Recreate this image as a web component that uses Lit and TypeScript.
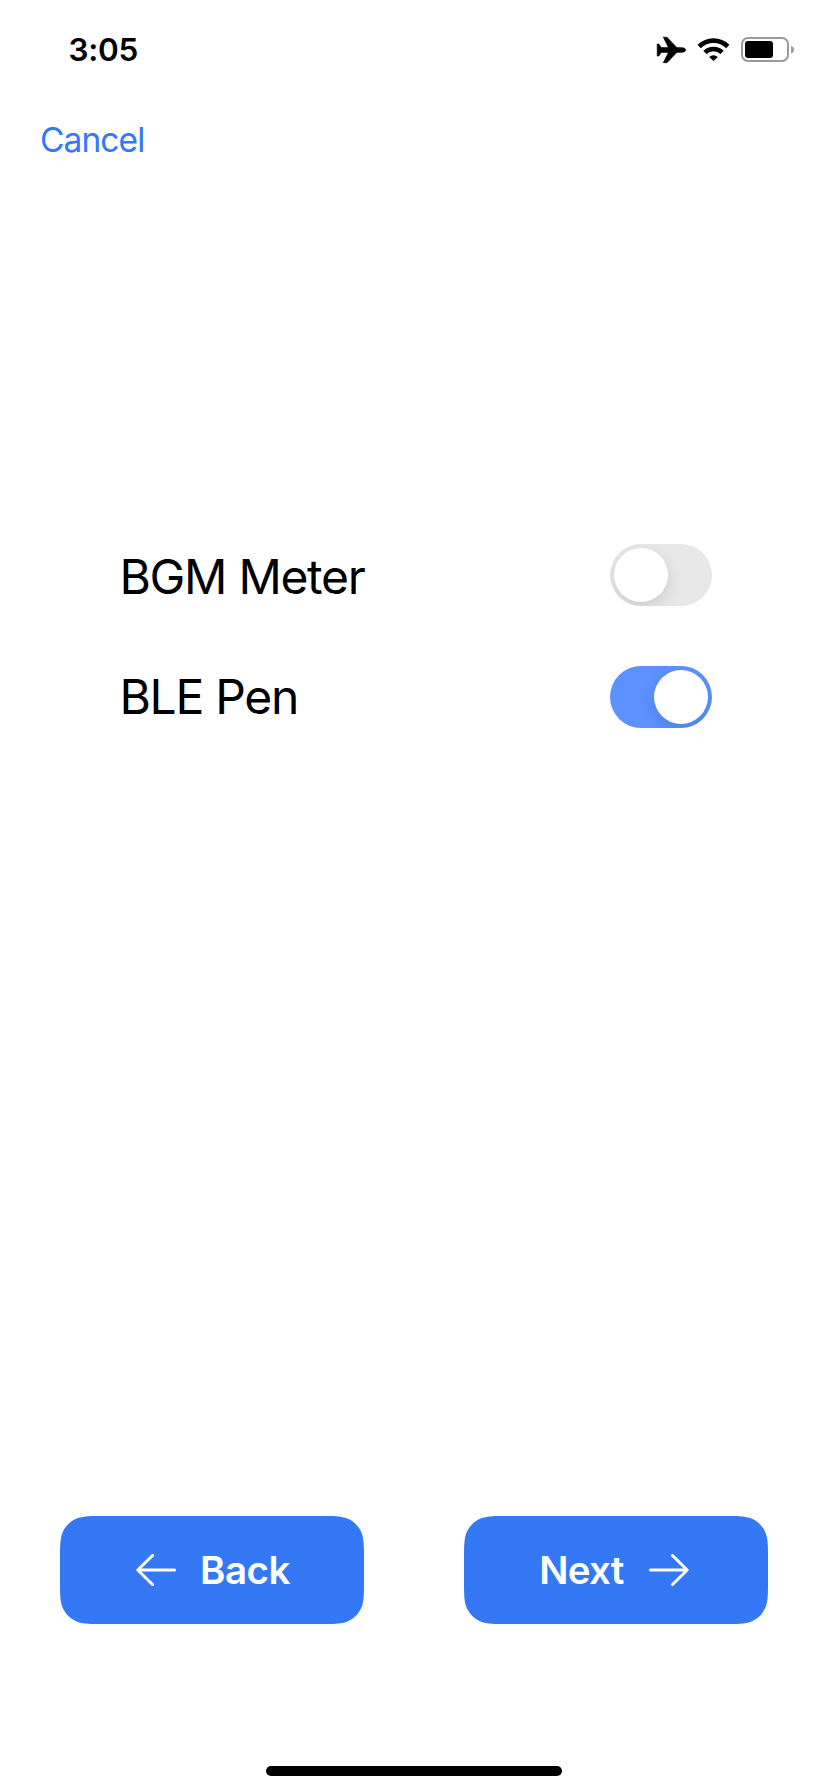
import { LitElement, html, svg, css } from "lit";
import { customElement, property } from "lit/decorators.js";

/** Outline of a rectangle with continuous (smoothed) corners. */
function smoothRect(w: number, h: number, r: number): string {
  const a = 1.528665 * r, b = 1.08849296 * r, c = 0.86840694 * r, d = 0.63149379 * r;
  const e = 0.37282383 * r, f = 0.16905956 * r, g = 0.07491139 * r;
  return `M${a},0 H${w - a} C${w - b},0 ${w - c},0 ${w - d},${g} C${w - e},${f} ${w - f},${e} ${w - g},${d} C${w},${c} ${w},${b} ${w},${a}
  V${h - a} C${w},${h - b} ${w},${h - c} ${w - g},${h - d} C${w - f},${h - e} ${w - e},${h - f} ${w - d},${h - g} C${w - c},${h} ${w - b},${h} ${w - a},${h}
  H${a} C${b},${h} ${c},${h} ${d},${h - g} C${e},${h - f} ${f},${h - e} ${g},${h - d} C0,${h - c} 0,${h - b} 0,${h - a}
  V${a} C0,${b} 0,${c} ${g},${d} C${f},${e} ${e},${f} ${d},${g} C${c},0 ${b},0 ${a},0 Z`;
}

@customElement("toggle-switch")
export class ToggleSwitch extends LitElement {
  @property({ type: Boolean, reflect: true }) on = false;

  static styles = css`
    :host {
      display: flex;
      box-sizing: border-box;
      width: 102px;
      height: 62px;
      padding: 4px;
      border-radius: 31px;
      background: #e8e8e9;
      overflow: hidden;
    }
    :host([on]) {
      justify-content: flex-end;
      background: #5c91ff;
    }
    .knob {
      width: 54px;
      height: 54px;
      border-radius: 50%;
      background: #fff;
      box-shadow: 0 6px 16px rgba(0, 0, 0, 0.12);
    }
  `;

  render() {
    return html`<div class="knob"></div>`;
  }
}

@customElement("nav-button")
export class NavButton extends LitElement {
  @property() label = "";
  @property() direction: "back" | "next" = "back";

  static styles = css`
    :host {
      display: grid;
      width: 304px;
      height: 108px;
    }
    .shape,
    .content {
      grid-area: 1 / 1;
    }
    .shape {
      display: block;
      fill: #3478f6;
    }
    .content {
      display: flex;
      align-items: center;
      color: #fff;
      font: 600 38.5px/48px Inter, sans-serif;
      white-space: nowrap;
    }
    .back {
      padding-left: 76px;
      gap: 24px;
      letter-spacing: -0.45px;
    }
    .next {
      flex-direction: row-reverse;
      padding-right: 79px;
      gap: 25.5px;
      letter-spacing: -0.75px;
    }
    .arrow {
      flex: none;
      fill: none;
      stroke: #fff;
      stroke-width: 3;
      stroke-linecap: round;
      stroke-linejoin: round;
    }
  `;

  render() {
    const d = this.direction === "back"
      ? "M38.5 16H1.8M16.5 1.5L1.8 16L16.5 30.5"
      : "M1.5 16H38.2M23.5 1.5L38.2 16L23.5 30.5";
    return html`
      <svg class="shape" width="304" height="108"><path d=${smoothRect(304, 108, 28)}></path></svg>
      <div class="content ${this.direction}">
        <svg class="arrow" width="40" height="32">${svg`<path d=${d}></path>`}</svg>
        <span>${this.label}</span>
      </div>
    `;
  }
}

@customElement("app-root")
export class AppRoot extends LitElement {
  static styles = css`
    :host {
      display: flex;
      flex-direction: column;
      box-sizing: border-box;
      width: 828px;
      height: 1792px;
      background: #fff;
      color: #000;
      font-family: Inter, sans-serif;
      white-space: nowrap;
    }
    .status {
      display: flex;
      justify-content: space-between;
      height: 100px;
      padding: 0 33px 0 68.5px;
    }
    .time {
      padding-top: 30px;
      font-size: 31.5px;
      font-weight: 600;
      line-height: 40px;
      letter-spacing: -0.3px;
    }
    .icons {
      display: block;
      margin-top: 36px;
    }
    .bar {
      height: 80px;
      padding-left: 40px;
    }
    .cancel {
      display: block;
      padding-top: 20px;
      color: #3478f6;
      font-size: 33.5px;
      line-height: 40px;
      letter-spacing: -0.9px;
    }
    .settings {
      display: flex;
      justify-content: space-between;
      padding: 364px 116px 0 119.5px;
    }
    .labels {
      display: grid;
      grid-auto-rows: 60px;
      gap: 60px;
      padding-top: 3px;
      font-size: 48px;
      line-height: 60px;
      letter-spacing: -1.3px;
    }
    .switches {
      display: grid;
      gap: 60px;
    }
    .actions {
      display: flex;
      justify-content: space-between;
      margin-top: auto;
      padding: 0 60px;
    }
    .home {
      width: 296px;
      height: 10px;
      margin: 142px auto 16px;
      border-radius: 5px;
      background: #000;
    }
  `;

  render() {
    return html`
      <div class="status">
        <span class="time">3:05</span>
        <svg class="icons" width="139" height="28" viewBox="656 36 139 28">
          <path d="M657.2 44H658.9L661.2 47.6H668.4L663.3 37.2H667L676.8 47.6L682.5 47.7C684.6 47.9 685.7 48.9 685.7 50C685.7 51.1 684.6 52.1 682.5 52.3L676.8 52.4L667 62.7H663.3L668.4 52.4H661.2L658.9 56H657.2Z"
            stroke="#000" stroke-width="0.6" stroke-linejoin="round"></path>
          <g fill="none" stroke="#000" stroke-width="4.6">
            <path d="M699.2 46.5A20.4 20.4 0 0 1 727.8 46.5"></path>
            <path d="M704.9 52.4A12.4 12.4 0 0 1 722.1 52.4"></path>
          </g>
          <path d="M713.5 61L709.2 56.9A6.2 6.2 0 0 1 717.8 56.9Z"></path>
          <rect x="742" y="38" width="46" height="23" rx="6" fill="none" stroke="#9a9a9a" stroke-width="2"></rect>
          <rect x="745" y="41" width="28" height="17" rx="3"></rect>
          <path d="M791 45.7C795 47 795 52.3 791 53.6Z" fill="#9a9a9a"></path>
        </svg>
      </div>
      <div class="bar"><span class="cancel">Cancel</span></div>
      <div class="settings">
        <div class="labels"><span>BGM Meter</span><span>BLE Pen</span></div>
        <div class="switches"><toggle-switch></toggle-switch><toggle-switch on></toggle-switch></div>
      </div>
      <div class="actions">
        <nav-button label="Back" direction="back"></nav-button>
        <nav-button label="Next" direction="next"></nav-button>
      </div>
      <div class="home"></div>
    `;
  }
}
